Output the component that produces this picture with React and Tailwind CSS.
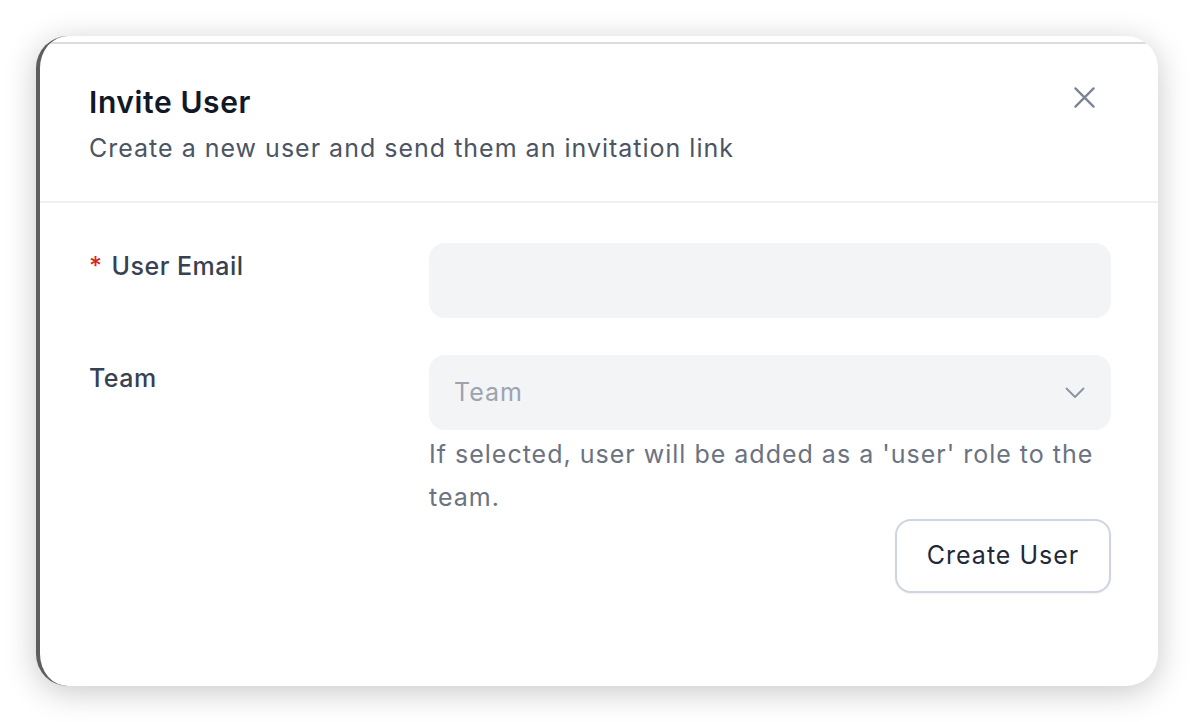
import React from "react";

function CloseIcon() {
  return (
    <svg width="21" height="21" viewBox="0 0 22 22" fill="none" className="block">
      <path d="M1.5 1.5L20.5 20.5M20.5 1.5L1.5 20.5" stroke="#7b8494" strokeWidth="2.4" strokeLinecap="round" />
    </svg>
  );
}

function Chevron() {
  return (
    <svg width="20" height="12" viewBox="0 0 20 12" fill="none" className="block">
      <path d="M1.5 1.5L10 10L18.5 1.5" stroke="#8b93a1" strokeWidth="1.8" strokeLinecap="round" strokeLinejoin="round" />
    </svg>
  );
}

export default function App() {
  return (
    <div className="min-h-[722px] w-[1194px] bg-white pl-[36px] pt-[36px] font-['Inter','Noto_Sans',sans-serif]">
      <div className="h-[650px] w-[1122px] overflow-hidden rounded-[32px] border-l-4 border-l-[#5e5e5e] bg-white shadow-[0_6px_32px_rgba(0,0,0,0.22)]">
        <div className="mt-[6px] h-[2px] bg-[#dcdcdc]" />

        {/* header */}
        <div className="flex items-start justify-between pl-[49px] pr-[63px] pt-[40px] pb-[37px]">
          <div>
            <h2 className="text-[30px] leading-[36px] font-semibold tracking-[0.6px] text-[#111827]">Invite User</h2>
            <p className="mt-[12px] text-[25px] leading-[32px] tracking-[1px] text-[#4b5563]">
              Create a new user and send them an invitation link
            </p>
          </div>
          <button className="mt-[3px]">
            <CloseIcon />
          </button>
        </div>
        <div className="h-[2px] bg-[#f0f0f3]" />

        {/* form */}
        <div className="pl-[49px] pr-[47px] pt-[40px]">
          <div className="flex">
            <label className="mt-[7px] w-[340px] shrink-0 text-[25px] leading-[32px] font-medium tracking-[0.5px] text-[#374151]">
              <span className="mr-[9px] text-[#dc2626]">*</span>User Email
            </label>
            <div className="h-[75px] flex-1 rounded-[16px] bg-[#f3f4f6]" />
          </div>

          <div className="mt-[37px] flex">
            <label className="mt-[7px] w-[340px] shrink-0 text-[25px] leading-[32px] font-medium tracking-[0.5px] text-[#374151]">
              Team
            </label>
            <div className="flex-1">
              <div className="flex h-[75px] items-center justify-between rounded-[16px] bg-[#f3f4f6] pl-[25px] pr-[26px]">
                <span className="text-[25px] tracking-[1px] text-[#9ca3af]">Team</span>
                <Chevron />
              </div>
              <p className="mt-[3px] text-[25px] leading-[43px] tracking-[1px] text-[#6b7280]">
                If selected, user will be added as a 'user' role to the team.
              </p>
              <div className="flex justify-end">
                <button className="h-[74px] w-[216px] rounded-[16px] border-2 border-[#cfd5e0] bg-white text-[25px] tracking-[1px] text-[#1f2937] shadow-[0_1px_2px_rgba(0,0,0,0.06)]">
                  Create User
                </button>
              </div>
            </div>
          </div>
        </div>
      </div>
    </div>
  );
}
